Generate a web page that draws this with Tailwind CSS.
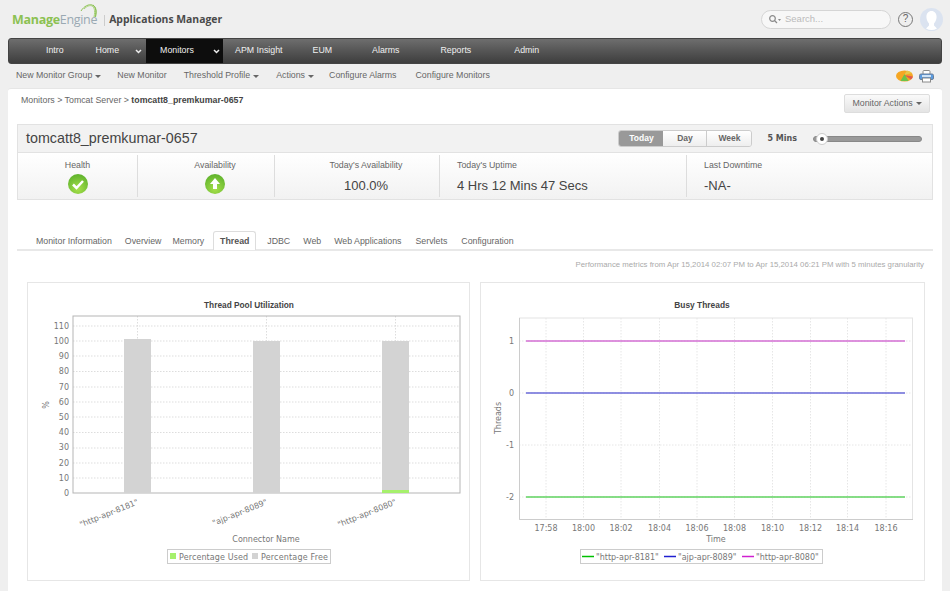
<!DOCTYPE html>
<html lang="en">
  <head>
    <meta charset="UTF-8" />
    <title>Applications Manager</title>
    <script src="https://cdn.jsdelivr.net/npm/@tailwindcss/browser@4"></script>
  </head>
  <body class="bg-[#efefef] font-['Liberation_Sans',Arial,sans-serif] text-[#555]">
    <div class="w-[950px] h-[591px] overflow-hidden">
      <!-- Header -->
      <div class="h-[38px] flex items-center pl-[12px] pr-[7px]">
        <div class="relative flex items-center mt-[2px]">
          <span class="font-['Open_Sans',sans-serif] text-[12.5px] tracking-[-0.3px]"><span class="font-bold text-[#8cc152]">Manage</span><span class="text-[#9aa9b3]">Engine</span></span>
          <svg width="20" height="18" viewBox="0 0 20 18" fill="none" class="absolute left-[68px] top-[-8px]">
            <path d="M1 8c3-5 8-7 11-6s5 5 3 12" stroke="#8cc152" stroke-width="1" />
            <path d="M4 6c3-3 6-4 8-3s3.500 4 2 11" stroke="#a9d37a" stroke-width="1" />
            <path d="M13 2c3 2 4 6 2.500 12" stroke="#8cc152" stroke-width="1" />
          </svg>
          <span class="w-px h-[11px] bg-[#ccc] ml-[7px] mr-[4px]"></span>
          <span class="font-['Open_Sans',sans-serif] font-bold text-[10.4px] text-[#4a4a4a]">Applications Manager</span>
        </div>
        <div class="ml-auto flex items-center h-[19px] w-[130px] rounded-full bg-[#f7f7f7] border border-[#d5d5d5] pl-[6px]">
          <svg width="13" height="11" viewBox="0 0 13 11" fill="none" stroke="#8a8a8a" stroke-width="1.200">
            <circle cx="4.500" cy="4.500" r="2.800" />
            <path d="M6.500 6.500L9 9" />
            <path d="M10 5h3l-1.500 2z" fill="#8a8a8a" stroke="none" />
          </svg>
          <span class="text-[9.5px] text-[#bbb] ml-[4px]">Search...</span>
        </div>
        <div class="ml-[7px] w-[15px] h-[15px] rounded-full border border-[#777] flex items-center justify-center text-[10px] leading-none text-[#666]">?</div>
        <svg width="23" height="23" viewBox="0 0 23 23" class="ml-[7px]">
          <circle cx="11.500" cy="11.500" r="11.500" fill="#dbe3f0" />
          <path d="M11.500 3c3.500 0 5.500 3 5 7-.3 2.500-1.500 4.500-2.500 5.500v2l3 3a11 11 0 0 1-11 0l3-3v-2c-1-1-2.200-3-2.500-5.500-.5-4 1.500-7 5-7z" fill="#fff" />
        </svg>
      </div>

      <!-- Main nav -->
      <nav class="mx-[8px] h-[26px] rounded-[3px] border border-[#444] bg-gradient-to-b from-[#6e6e6e] via-[#555] to-[#3e3e3e] flex items-center text-[8.8px] text-[#f0f0f0]">
        <span class="ml-[37px]">Intro</span>
        <span class="ml-[32px]">Home</span>
        <svg width="7" height="5" viewBox="0 0 7 5" fill="none" stroke="#eee" stroke-width="1.500" class="ml-[16px]"><path d="M1 1l2.500 2.500L6 1" /></svg>
        <div class="ml-[4px] w-[77px] h-full bg-[#0d0d0d] flex items-center pl-[14px]">
          <span>Monitors</span>
          <svg width="7" height="5" viewBox="0 0 7 5" fill="none" stroke="#eee" stroke-width="1.500" class="ml-[19px]"><path d="M1 1l2.500 2.500L6 1" /></svg>
        </div>
        <span class="ml-[12px]">APM Insight</span>
        <span class="ml-[30px]">EUM</span>
        <span class="ml-[40px]">Alarms</span>
        <span class="ml-[41px]">Reports</span>
        <span class="ml-[43px]">Admin</span>
      </nav>

      <!-- Sub nav -->
      <div class="h-[24px] flex items-center pl-[16px] pr-[16px] text-[8.8px] text-[#666]">
        <span>New Monitor Group</span>
        <span class="ml-[3px] border-x-[3px] border-x-transparent border-t-[3px] border-t-[#666]"></span>
        <span class="ml-[16px]">New Monitor</span>
        <span class="ml-[17px]">Threshold Profile</span>
        <span class="ml-[3px] border-x-[3px] border-x-transparent border-t-[3px] border-t-[#666]"></span>
        <span class="ml-[17px]">Actions</span>
        <span class="ml-[3px] border-x-[3px] border-x-transparent border-t-[3px] border-t-[#666]"></span>
        <span class="ml-[15px]">Configure Alarms</span>
        <span class="ml-[19px]">Configure Monitors</span>
        <svg width="17" height="12" viewBox="0 0 17 12" class="ml-auto">
          <ellipse cx="8.500" cy="6" rx="8.500" ry="5.500" fill="#f5a623" />
          <path d="M8 5L16 3a8.500 5.500 0 0 0-5-2.500z" fill="#e8c84a" />
          <path d="M8 5l8.800 1.500a9 5 0 0 1-1.800 3z" fill="#e05a4e" />
          <path d="M8.500 4L4.500 11h8z" fill="#6cc24a" />
        </svg>
        <svg width="15" height="13" viewBox="0 0 15 13" class="ml-[6px]">
          <rect x="4" y="0.500" width="7" height="4" rx="1" fill="#fff" stroke="#8a8a8a" />
          <rect x="0.500" y="4" width="14" height="5.500" rx="1.500" fill="#5a9be0" stroke="#6a7f99" />
          <rect x="3" y="5" width="9" height="2" fill="#cfe3f7" />
          <rect x="3.500" y="8" width="8" height="4" fill="#fff" stroke="#8a8a8a" />
        </svg>
      </div>

      <!-- White panel -->
      <main class="mx-[8px] h-[503px] bg-white rounded-t-[3px] border-t border-[#e6e6e6] relative">
        <div class="flex items-start justify-between pl-[13px] pr-[12px] pt-[5px] h-[35px]">
          <p class="text-[8.8px] text-[#666]">Monitors &gt; Tomcat Server &gt; <b class="text-[#444]">tomcatt8_premkumar-0657</b></p>
          <button class="w-[86px] h-[19px] rounded-[2px] border border-[#ddd] bg-gradient-to-b from-[#fafafa] to-[#e4e4e4] text-[8.8px] text-[#666] flex items-center justify-center">
            Monitor Actions
            <span class="ml-[3px] border-x-[3px] border-x-transparent border-t-[3px] border-t-[#666]"></span>
          </button>
        </div>

        <!-- Summary box -->
        <section class="mx-[9px] border border-[#e2e2e2]">
          <div class="h-[28px] bg-[#f2f2f2] border-b border-[#e2e2e2] flex items-center pl-[8px] pr-[10px]">
            <h1 class="text-[14.3px] text-[#444]">tomcatt8_premkumar-0657</h1>
            <div class="ml-auto flex h-[17px] rounded-[3px] border border-[#ccc] overflow-hidden text-[8.5px] font-bold text-[#666]">
              <span class="w-[44px] bg-[#999] text-white flex items-center justify-center">Today</span>
              <span class="w-[44px] bg-gradient-to-b from-white to-[#eee] border-r border-[#ccc] flex items-center justify-center">Day</span>
              <span class="w-[44px] bg-gradient-to-b from-white to-[#eee] flex items-center justify-center">Week</span>
            </div>
            <span class="ml-[15px] font-['DejaVu_Sans',sans-serif] text-[8px] font-bold text-[#555]">5 Mins</span>
            <div class="ml-[16px] w-[109px] h-[6px] rounded-full bg-[#999] border border-[#888] relative">
              <span class="absolute left-[2px] top-[-4px] w-[12px] h-[12px] rounded-full bg-white border border-[#ccc] flex items-center justify-center"><span class="w-[4px] h-[4px] rounded-full bg-[#444]"></span></span>
            </div>
          </div>
          <div class="h-[46px] flex bg-gradient-to-b from-white to-[#f2f2f2] py-[2px] text-[8.8px] text-[#666]">
            <div class="w-[120px] border-r border-[#ddd] flex flex-col items-center pt-[4px]">
              <span>Health</span>
              <svg width="20" height="20" viewBox="0 0 20 20" class="mt-[2px]">
                <defs>
                  <radialGradient id="okGlow" cx="50%" cy="75%" r="70%">
                    <stop offset="0" stop-color="#a6e04a" />
                    <stop offset="1" stop-color="#63b52e" />
                  </radialGradient>
                </defs>
                <circle cx="10" cy="10" r="10" fill="url(#okGlow)" />
                <path d="M5 10.500l3.500 3.500L15 7" fill="none" stroke="#fff" stroke-width="2.500" />
              </svg>
            </div>
            <div class="w-[137px] pl-[18px] border-r border-[#ddd] flex flex-col items-center pt-[4px]">
              <span>Availability</span>
              <svg width="20" height="20" viewBox="0 0 20 20" class="mt-[2px]">
                <circle cx="10" cy="10" r="10" fill="url(#okGlow)" />
                <path d="M10 4l5 6h-3v5H8v-5H5z" fill="#fff" />
              </svg>
            </div>
            <div class="w-[165px] pl-[18px] border-r border-[#ddd] flex flex-col items-center pt-[4px]">
              <span>Today's Availability</span>
              <span class="text-[13px] text-[#444] mt-[4px]">100.0%</span>
            </div>
            <div class="w-[247px] border-r border-[#ddd] flex flex-col pl-[17px] pt-[4px]">
              <span>Today's Uptime</span>
              <span class="text-[13px] text-[#444] mt-[4px]">4 Hrs 12 Mins 47 Secs</span>
            </div>
            <div class="flex flex-col pl-[17px] pt-[4px]">
              <span>Last Downtime</span>
              <span class="text-[13px] text-[#444] mt-[4px]">-NA-</span>
            </div>
          </div>
        </section>

        <!-- Tabs -->
        <div class="mx-[9px] mt-[32px] h-[19px] pt-[2px] border-b-2 border-[#e8e8e8] flex items-center pl-[19px] text-[8.8px] text-[#666]">
          <span>Monitor Information</span>
          <span class="ml-[13px]">Overview</span>
          <span class="ml-[11px]">Memory</span>
          <span class="ml-[9px] w-[43px] h-[19px] mt-[-2px] pt-[2px] border border-b-0 border-[#ddd] rounded-t-[3px] bg-white font-bold text-[#555] flex items-center justify-center">Thread</span>
          <span class="ml-[11px]">JDBC</span>
          <span class="ml-[13px]">Web</span>
          <span class="ml-[13px]">Web Applications</span>
          <span class="ml-[14px]">Servlets</span>
          <span class="ml-[14px]">Configuration</span>
        </div>
        <p class="text-right pr-[18px] mt-[8px] text-[7.8px] text-[#aaa]">Performance metrics from Apr 15,2014 02:07 PM to Apr 15,2014 06:21 PM with 5 minutes granularity</p>

        <!-- Charts -->
        <div class="mt-[11px] ml-[19px] flex gap-[10px]">
          <div class="w-[443px] h-[299px] border border-[#e6e6e6] shrink-0">
            <svg width="441" height="297" viewBox="28 283 441 297" font-family="DejaVu Sans, sans-serif" font-size="8" fill="#777">
              <text x="249" y="308" text-anchor="middle" font-family="Liberation Sans" font-size="8.300" font-weight="bold" fill="#444">Thread Pool Utilization</text>
              <g stroke="#ddd" stroke-dasharray="1.500 1.500" stroke-width="1">
                <path d="M73 326H460M73 341H460M73 356H460M73 371.500H460M73 387H460M73 402H460M73 417H460M73 432.500H460M73 448H460M73 463H460M73 478H460" />
                <path d="M137.500 316V493M266.500 316V493M395.500 316V493" />
              </g>
              <rect x="73" y="316" width="387" height="177" fill="none" stroke="#b5b5b5" />
              <rect x="124" y="339" width="27" height="154" fill="#d3d3d3" />
              <rect x="253" y="341" width="27" height="152" fill="#d3d3d3" />
              <rect x="382" y="341" width="27" height="152" fill="#d3d3d3" />
              <rect x="382" y="490" width="27" height="3" fill="#a6f06c" />
              <g text-anchor="end">
                <text x="69" y="329">110</text><text x="69" y="344">100</text><text x="69" y="359">90</text><text x="69" y="374">80</text><text x="69" y="390">70</text><text x="69" y="405">60</text><text x="69" y="420">50</text><text x="69" y="435">40</text><text x="69" y="450">30</text><text x="69" y="466">20</text><text x="69" y="481">10</text><text x="69" y="496">0</text>
              </g>
              <text transform="translate(49 405) rotate(-90)" text-anchor="middle">%</text>
              <g text-anchor="end">
                <text transform="translate(139 504) rotate(-22)">"http-apr-8181"</text>
                <text transform="translate(268 504) rotate(-22)">"ajp-apr-8089"</text>
                <text transform="translate(397 504) rotate(-22)">"http-apr-8080"</text>
              </g>
              <text x="266" y="542" text-anchor="middle">Connector Name</text>
              <rect x="167.500" y="549.500" width="163" height="14" fill="#fff" stroke="#ccc" />
              <rect x="170" y="553" width="6" height="6" fill="#a6f06c" />
              <text x="179" y="559.500" textLength="69">Percentage Used</text>
              <rect x="252" y="553" width="6" height="6" fill="#d3d3d3" />
              <text x="261" y="559.500" textLength="67">Percentage Free</text>
            </svg>
          </div>
          <div class="w-[445px] h-[299px] border border-[#e6e6e6] shrink-0">
            <svg width="443" height="297" viewBox="481 283 443 297" font-family="DejaVu Sans, sans-serif" font-size="8" fill="#777">
              <text x="702" y="308" text-anchor="middle" font-family="Liberation Sans" font-size="8.400" font-weight="bold" fill="#444">Busy Threads</text>
              <g stroke="#e6e6e6" stroke-dasharray="1.500 1.500">
                <path d="M519 341H913M519 393H913M519 445H913M519 497H913" />
                <path d="M546 318V519M583.500 318V519M621 318V519M659.500 318V519M697 318V519M734.500 318V519M772.500 318V519M810.500 318V519M847.500 318V519M886 318V519" />
              </g>
              <rect x="519.500" y="318" width="393" height="201.500" fill="none" stroke="#e4e4e4" />
              <path d="M519.500 318V519.500H913" fill="none" stroke="#ccc" />
              <path d="M526 341H905" stroke="#d36ed3" stroke-width="1.600" />
              <path d="M526 393H905" stroke="#6a6ad8" stroke-width="1.600" />
              <path d="M526 497H905" stroke="#5fd35f" stroke-width="1.600" />
              <g text-anchor="end">
                <text x="514" y="344">1</text><text x="514" y="396">0</text><text x="514" y="448">-1</text><text x="514" y="500">-2</text>
              </g>
              <text transform="translate(501 418) rotate(-90)" text-anchor="middle">Threads</text>
              <g text-anchor="middle">
                <text x="546" y="531">17:58</text><text x="583.500" y="531">18:00</text><text x="621" y="531">18:02</text><text x="659.500" y="531">18:04</text><text x="697" y="531">18:06</text><text x="734.500" y="531">18:08</text><text x="772.500" y="531">18:10</text><text x="810.500" y="531">18:12</text><text x="847.500" y="531">18:14</text><text x="886" y="531">18:16</text>
              </g>
              <text x="716" y="542" text-anchor="middle">Time</text>
              <rect x="580.500" y="549.500" width="242" height="14" fill="#fff" stroke="#ccc" />
              <path d="M582 556.500h12" stroke="#00c000" stroke-width="1.500" />
              <text x="596" y="559.500">"http-apr-8181"</text>
              <path d="M664 556.500h12" stroke="#2020d0" stroke-width="1.500" />
              <text x="678" y="559.500">"ajp-apr-8089"</text>
              <path d="M742 556.500h12" stroke="#d020d0" stroke-width="1.500" />
              <text x="756" y="559.500">"http-apr-8080"</text>
            </svg>
          </div>
        </div>
      </main>
    </div>
  </body>
</html>
